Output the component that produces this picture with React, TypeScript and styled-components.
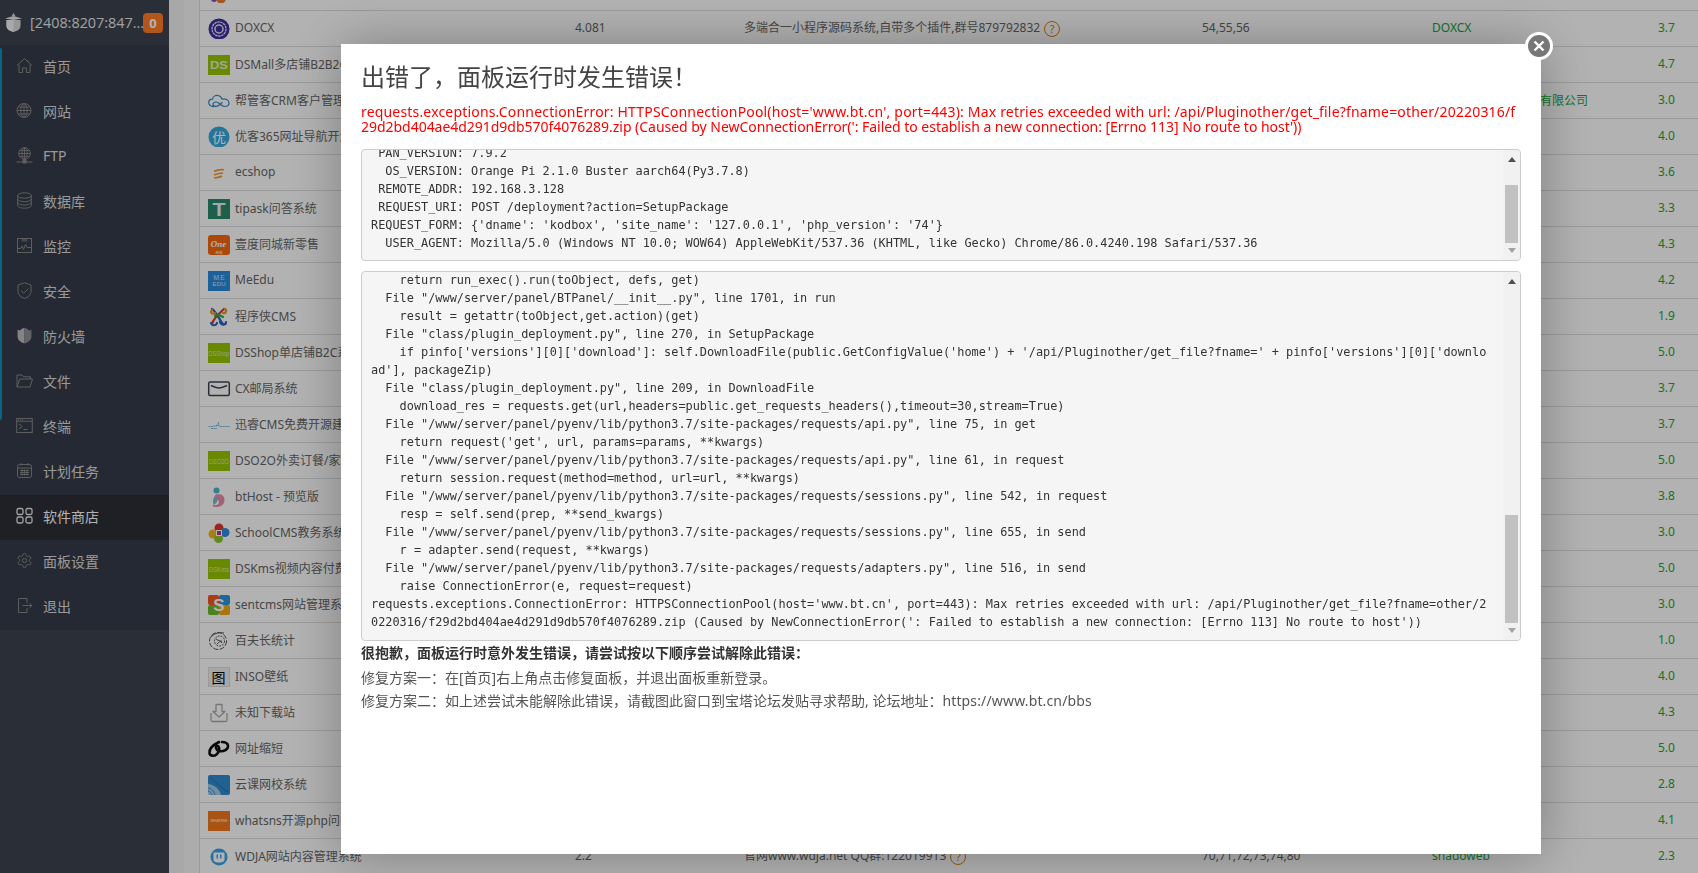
import React from 'react';
import styled, { createGlobalStyle } from 'styled-components';

const UI = `"Noto Sans", "Noto Sans CJK SC", sans-serif`;

const Global = createGlobalStyle`
  html, body { margin: 0; padding: 0; height: 100%; overflow: hidden; background: #f1f1f1; }
  body { font-family: ${UI}; font-size: 12px; color: #666; }
`;

const Page = styled.div`
  display: flex;
  height: 873px;
  overflow: hidden;
`;

const Sidebar = styled.aside`
  width: 169px;
  flex: none;
  background: #3c424f;
  display: flex;
  flex-direction: column;
`;

const SideHead = styled.div`
  height: 45px;
  display: flex;
  align-items: center;
  padding-left: 5px;
  color: #e6e6e6;
  font-size: 14.4px;
`;

const HeadTitle = styled.span`
  margin-left: 8px;
  width: 113px;
  white-space: nowrap;
  font-family: "Open Sans", ${UI};
`;

const Badge = styled.span`
  width: 20px;
  height: 20px;
  border-radius: 4px;
  background: #ff7b28;
  color: #fff;
  font-size: 13px;
  font-weight: 700;
  display: flex;
  align-items: center;
  justify-content: center;
`;

const Menu = styled.nav`
  position: relative;
  background: #363c49;
  &::before {
    content: '';
    position: absolute;
    left: 0;
    top: 3px;
    width: 2px;
    height: 372px;
    background: #0e90c0;
    border-radius: 0 2px 2px 0;
  }
`;

const MenuItem = styled.div<{ $active?: boolean }>`
  height: 45px;
  box-sizing: border-box;
  padding: 0 0 4px 16px;
  display: flex;
  align-items: center;
  gap: 10px;
  font-size: 14px;
  color: ${p => (p.$active ? '#fff' : '#dcdcdc')};
  background: ${p => (p.$active ? '#2b2e35' : 'transparent')};
  svg { width: 17px; height: 17px; flex: none; }
`;

const Strip = styled.div`
  width: 15px;
  flex: none;
  background: #f1f1f1;
`;

const Main = styled.main`
  flex: 1;
  min-width: 0;
  background: #f7f7f7;
  padding-left: 15px;
`;

const Table = styled.div`
  margin-top: -25px;
  background: #fff;
  border-left: 1px solid #ddd;
`;

const Row = styled.div`
  height: 35px;
  box-sizing: border-box;
  padding-bottom: 2px;
  height: 36px;
  border-bottom: 1px solid #ddd;
  display: grid;
  grid-template-columns: 375px 169px 458px 230px 226px 1fr;
  align-items: center;
  white-space: nowrap;
`;

const NameCell = styled.div`
  display: flex;
  align-items: center;
  padding-left: 8px;
  gap: 5px;
  overflow: hidden;
  svg { width: 22px; height: 20px; flex: none; overflow: visible; margin-top: 2px; }
`;

const Cell = styled.div``;

const Dev = styled.div`
  color: #20a53a;
`;

const Score = styled.div`
  color: #20a53a;
`;

const Help = styled.span`
  display: inline-flex;
  align-items: center;
  justify-content: center;
  width: 14px;
  height: 14px;
  margin-left: 4px;
  border: 1px solid #e07b10;
  border-radius: 50%;
  color: #e07b10;
  font-size: 11px;
  line-height: 1;
  vertical-align: middle;
`;

const Overlay = styled.div`
  position: fixed;
  inset: 0;
  background: rgba(0, 0, 0, 0.3);
  z-index: 10;
`;

const Modal = styled.section`
  position: fixed;
  left: 341px;
  top: 44px;
  width: 1160px;
  height: 810px;
  padding: 0 20px;
  background: #fff;
  box-shadow: 1px 1px 50px rgba(0, 0, 0, 0.3);
  z-index: 11;
`;

const Close = styled.button`
  position: absolute;
  right: -12px;
  top: -12px;
  width: 28px;
  height: 28px;
  padding: 0;
  border: 3px solid #fff;
  border-radius: 50%;
  background: #777;
  display: flex;
  align-items: center;
  justify-content: center;
  svg { width: 12px; height: 12px; }
`;

const Title = styled.h1`
  margin: 0;
  padding-top: 16px;
  font-size: 24px;
  line-height: 34px;
  font-weight: 400;
  color: #444;
`;

const ErrorText = styled.div`
  margin: 10px 0 15px;
  color: #f00;
  font-size: 14px;
  line-height: 15px;
  white-space: pre;
`;

const ErrorLine = styled.div<{ $ls: number }>`
  letter-spacing: ${p => p.$ls}px;
`;

const Pre = styled.div<{ $h: number }>`
  height: ${p => p.$h}px;
  box-sizing: border-box;
  border: 1px solid #ccc;
  border-radius: 4px;
  background: #f5f5f5;
  display: flex;
  overflow: hidden;
  margin-bottom: 10px;
`;

const Code = styled.pre<{ $shift: number }>`
  flex: 1;
  min-width: 0;
  margin: ${p => p.$shift}px 0 0;
  padding-left: 9px;
  font-family: "DejaVu Sans Mono", monospace;
  font-size: 11.88px;
  line-height: 18px;
  color: #333;
  overflow: hidden;
`;

const Scrollbar = styled.div`
  width: 17px;
  flex: none;
  display: flex;
  flex-direction: column;
  align-items: center;
  background: #f1f1f1;
`;

const ArrowUp = styled.i`
  width: 0;
  height: 0;
  margin-top: 7px;
  border: 4px solid transparent;
  border-top: 0;
  border-bottom: 5px solid #505050;
`;

const ArrowDown = styled.i`
  width: 0;
  height: 0;
  margin-bottom: 7px;
  border: 4px solid transparent;
  border-bottom: 0;
  border-top: 5px solid #a3a3a3;
`;

const Track = styled.div<{ $top: number; $h: number }>`
  flex: 1;
  width: 100%;
  padding: ${p => p.$top}px 2px 0;
  box-sizing: border-box;
  &::after {
    content: '';
    display: block;
    height: ${p => p.$h}px;
    background: #c1c1c1;
  }
`;

const Note = styled.p<{ $bold?: boolean }>`
  margin: 0 0 ${p => (p.$bold ? 1 : -1)}px;
  font-size: 14px;
  line-height: 24px;
  font-weight: ${p => (p.$bold ? 700 : 400)};
  color: ${p => (p.$bold ? '#333' : '#555')};
`;

const Url = styled.span`
  letter-spacing: 0.15px;
`;

const Notes = styled.div`
  margin-top: -10px;
`;

const S = { fill: 'none', stroke: '#878787', strokeWidth: 1 } as const;

const menu: [string, React.ReactNode, boolean?][] = [
  ['首页', <svg viewBox="0 0 17 17" {...S}><path d="M.8 8.6 8.5 1.6l7.7 7M3 7.5V15.5h3.6v-4.6h3.8v4.6H14V7.5M12 3.4V5" /></svg>],
  ['网站', <svg viewBox="0 0 17 17" {...S}><circle cx="8" cy="8.5" r="7" /><ellipse cx="8" cy="8.5" rx="3.2" ry="7" /><path d="M1 8.5h14M2 5h12M2 12h12M8 1.5v14" /></svg>],
  ['FTP', <svg viewBox="0 0 17 17" {...S}><circle cx="8.5" cy="6.5" r="5.8" /><ellipse cx="8.5" cy="6.5" rx="2.6" ry="5.8" /><path d="M2.7 6.5h11.6M3.5 3.6h10M3.5 9.4h10M8.5.7v13M.5 15h16" /><rect x="7" y="13" width="3" height="3" fill="#878787" /></svg>],
  ['数据库', <svg viewBox="0 0 17 17" {...S}><ellipse cx="8.5" cy="3.5" rx="6.8" ry="2.7" /><path d="M1.7 3.5v10c0 1.5 3 2.7 6.8 2.7s6.8-1.2 6.8-2.7v-10M1.7 7c0 1.5 3 2.7 6.8 2.7S15.300 8.500 15.300 7M1.700 10.300c0 1.500 3 2.700 6.800 2.700s6.800-1.200 6.800-2.700" /></svg>],
  ['监控', <svg viewBox="0 0 17 17" {...S}><rect x="1.500" y="1.500" width="14" height="14" /><path d="M1.500 11.500h3l1.500-2.500 1.500 3.500 2-5 1.500 3h4.500" /><rect x="5.500" y="1.500" width="6" height="3" fill="#878787" stroke="none" opacity=".6" /></svg>],
  ['安全', <svg viewBox="0 0 17 17" {...S}><path d="M8.500.8 15 3v6.500c0 3.500-3 5.800-6.500 6.900C5 15.300 2 13 2 9.500V3z" /><path d="m5 8.500 2.700 2.700L12.500 6.500" /></svg>],
  ['防火墙', <svg viewBox="0 0 17 17"><path d="M8.500.8V16.500C5 15.500 1.600 13 1.600 9.500V2.800L4 3.500 6 1.800z" fill="#bdbdbd" /><path d="M8.500.8V16.500c3.500-1 6.900-3.500 6.900-7V2.800L13 3.500 11 1.800z" fill="#8f8f8f" /></svg>],
  ['文件', <svg viewBox="0 0 17 17" {...S}><path d="M1 15V3h5l1.500 1.800h7V7M1 15l2.800-8H16.500L14 15z" /></svg>],
  ['终端', <svg viewBox="0 0 17 17" {...S}><rect x=".7" y="1.500" width="15.600" height="14" /><path d="M.7 4.200h15.600M3 7l3.200 2.500L3 12M7.500 12.500h4" /><path d="M2 2.900h6" strokeDasharray="1 1" /></svg>],
  ['计划任务', <svg viewBox="0 0 17 17" {...S}><rect x="1.500" y="2.500" width="14" height="13" rx="2" /><path d="M1.500 6h14M5 1v2.500M12 1v2.500M4 8.500h9M4 10.500h9M4 12.500h9" /><path d="M6 7.500v6M8.500 7.500v6M11 7.500v6" /></svg>],
  ['软件商店', <svg viewBox="0 0 17 17" fill="none" stroke="#e8e8e8" strokeWidth="1.300"><rect x="1" y="1.500" width="6" height="6" rx="1.500" /><rect x="10" y="1.500" width="6" height="6" rx="1.500" /><rect x="1" y="10" width="6" height="6" rx="1.500" /><rect x="10" y="10" width="6" height="6" rx="1.500" /></svg>, true],
  ['面板设置', <svg viewBox="0 0 24 24" {...S} strokeWidth="1.400"><path d="M12.220 2h-.44a2 2 0 0 0-2 2v.18a2 2 0 0 1-1 1.730l-.43.250a2 2 0 0 1-2 0l-.15-.08a2 2 0 0 0-2.730.730l-.22.380a2 2 0 0 0 .730 2.730l.15.100a2 2 0 0 1 1 1.720v.510a2 2 0 0 1-1 1.740l-.15.090a2 2 0 0 0-.730 2.730l.22.380a2 2 0 0 0 2.730.730l.15-.08a2 2 0 0 1 2 0l.43.250a2 2 0 0 1 1 1.730V20a2 2 0 0 0 2 2h.44a2 2 0 0 0 2-2v-.18a2 2 0 0 1 1-1.730l.43-.250a2 2 0 0 1 2 0l.15.080a2 2 0 0 0 2.730-.730l.22-.390a2 2 0 0 0-.730-2.730l-.15-.080a2 2 0 0 1-1-1.740v-.500a2 2 0 0 1 1-1.740l.15-.090a2 2 0 0 0 .730-2.730l-.22-.380a2 2 0 0 0-2.730-.730l-.15.080a2 2 0 0 1-2 0l-.43-.250a2 2 0 0 1-1-1.730V4a2 2 0 0 0-2-2z" /><circle cx="12" cy="12" r="3" /></svg>],
  ['退出', <svg viewBox="0 0 17 17" {...S}><path d="M11 1.500H2.500v14H11M11 11v4.500M11 1.500V6" /><path d="M6.500 8.500h9.500M13.500 6.300l2.500 2.200-2.500 2.200" /></svg>],
];

const Tile = ({ bg, t, c = '#e8f0d0', size = 7, len = 20, w }: { bg: string; t: string; c?: string; size?: number; len?: number; w?: number }) => (
  <svg viewBox="0 0 22 20">
    <rect width="22" height="20" fill={bg} />
    <text x="11" y="10" textAnchor="middle" dominantBaseline="central" fontSize={size} fontWeight={w} fill={c} textLength={len} lengthAdjust="spacingAndGlyphs" fontFamily="Liberation Sans, sans-serif">{t}</text>
  </svg>
);

const logos: React.ReactNode[] = [
  <svg viewBox="0 0 22 20"><circle cx="6" cy="16" r="3" fill="#7a52c8" /><circle cx="13" cy="15.500" r="5" fill="#ef7d2c" /></svg>,
  <svg viewBox="0 0 22 20"><circle cx="11" cy="10" r="10.500" fill="#3d2f9c" /><circle cx="11" cy="10" r="7" fill="none" stroke="#e3e3f3" strokeWidth="1.300" strokeDasharray="2.500 .6" /><circle cx="11" cy="10" r="4" fill="none" stroke="#e3e3f3" strokeWidth="1.500" /><circle cx="11" cy="10" r="1.500" fill="#3d2f9c" /></svg>,
  <Tile bg="#95c400" t="DS" size={11} w={700} len={18} />,
  <svg viewBox="0 0 22 20" fill="none" stroke="#2f8ac6" strokeWidth="1.200"><path d="M6 15.500c-3 .300-5.300-1.500-5.300-3.800 0-2 1.600-3.500 3.700-3.500C5 5.500 7.500 4 10 4.500c2.200.4 3.500 2 4 3.700 3-1 7 .6 7 3.800 0 2.300-2 3.500-4.500 3.500-3.500 0-5-4.500-8.500-4.500-1.800 0-3 .9-3 2.200s1.500 2.200 3 2.200c3 0 4.500-3 6.500-4" /></svg>,
  <svg viewBox="0 0 22 20"><circle cx="11" cy="10" r="10.500" fill="#33a9dd" /><text x="11" y="10" textAnchor="middle" dominantBaseline="central" fontSize="14" fill="#fff" fontFamily="Noto Sans CJK SC, sans-serif">优</text></svg>,
  <svg viewBox="0 0 22 20" fill="none" stroke="#f09a3a" strokeWidth="1.600"><path d="M6 8.500c2.500-1.500 6-2.200 10-1.800M6 12c3-1.500 6-1.500 9-2M6 15c3-.300 6-.600 8-2" /></svg>,
  <Tile bg="#278a6c" t="T" size={19} w={700} c="#eef" len={13} />,
  <svg viewBox="0 0 22 20"><rect width="22" height="20" rx="3" fill="#f5680f" /><text x="10.500" y="9" textAnchor="middle" dominantBaseline="central" fontSize="9" fontStyle="italic" fontWeight="700" fill="#fff" fontFamily="Liberation Serif, serif">One</text><text x="11" y="17" textAnchor="middle" dominantBaseline="central" fontSize="3.500" fill="#fff" fontFamily="Noto Sans CJK SC, sans-serif">商城</text></svg>,
  <svg viewBox="0 0 22 20"><rect width="22" height="20" fill="#2a8cdd" /><text x="11" y="6.500" textAnchor="middle" dominantBaseline="central" fontSize="6.500" fill="#cfe6f8" textLength={11} fontFamily="Liberation Sans, sans-serif">ME</text><text x="11" y="13" textAnchor="middle" dominantBaseline="central" fontSize="6" fill="#cfe6f8" textLength={13} fontFamily="Liberation Sans, sans-serif">EDU</text></svg>,
  <svg viewBox="0 0 22 20" fill="none" strokeWidth="2.200" strokeLinecap="round"><path d="M4 2c3 1 7 10 11 15" stroke="#2a62c8" /><path d="M16 2c-3 3-10 8-12 15" stroke="#d63a2c" /><path d="M4 3c-2 2 0 5 3 3M17 2c2 1 1 5-2 4" stroke="#e8951f" /><path d="M3 16c1 3 5 3 6 0M12 15c2 4 6 3 6 0" stroke="#2a62c8" /><path d="M7 9c3-2 5-1 8 1" stroke="#3caa3c" /></svg>,
  <Tile bg="#95c400" t="DSShop" size={8} c="#dfe9bc" len={21} />,
  <svg viewBox="0 0 22 20" fill="none" stroke="#3c4452" strokeWidth="1.500"><rect x=".7" y="3" width="20.600" height="13.500" rx="1.500" /><path d="M3 6.500c3.500 1.500 5.500 2.500 8 2.500s4.500-1 8-2.500" /></svg>,
  <svg viewBox="0 0 22 20" fill="none" stroke="#6fb8cf" strokeWidth="1.100"><path d="M.5 11.500h5c1-2 2 1 3-.500s1-2 2-1 1 2 2 1.500h9M3 13.500h6M10 9l1-2" strokeDasharray="2 .7" /></svg>,
  <Tile bg="#95c400" t="DSO2O" size={8} c="#dfe9bc" len={20} />,
  <svg viewBox="0 0 22 20"><circle cx="8.500" cy="3.500" r="3" fill="#4fb2c8" /><path d="M8 7.500c5-1 8.500 1 8.500 5.500s-4 7-8 7-4-1-3.500-2c4 1 6-1 6-3s-2-3-4-3c-1.500 0-.500-3 1-4.500z" fill="#e88ba6" /><path d="M8 8c-1 1-3 3-3 6 0 2 .500 3.500 1 4l3-3c1-1 1-4-1-5z" fill="#80b8cf" /></svg>,
  <svg viewBox="0 0 22 20"><circle cx="11" cy="5" r="4.500" fill="#e0342c" /><circle cx="17" cy="9.500" r="4.500" fill="#2f8de0" /><circle cx="5" cy="11" r="4.500" fill="#f2b51f" /><circle cx="10.500" cy="15.500" r="4.500" fill="#8fc52f" /><rect x="8.500" y="7.500" width="5" height="5" fill="#b8348c" stroke="#fff" /></svg>,
  <Tile bg="#95c400" t="DSKms" size={8} c="#dfe9bc" len={20} />,
  <svg viewBox="0 0 22 20"><rect width="11" height="10" rx="2" fill="#ef5a1f" /><rect x="11" width="11" height="10" rx="2" fill="#2a96de" /><rect y="10" width="11" height="10" rx="2" fill="#6cba2c" /><rect x="11" y="10" width="11" height="10" rx="2" fill="#f2aa14" /><text x="11" y="10" textAnchor="middle" dominantBaseline="central" fontSize="17" fontWeight="700" fill="#fff" fontFamily="Liberation Sans, sans-serif">S</text></svg>,
  <svg viewBox="0 0 22 20" fill="none" stroke="#444" strokeWidth=".9"><circle cx="10" cy="10" r="8.500" strokeDasharray="5 1.500" /><circle cx="11.500" cy="10" r="5" strokeDasharray="2 1" /><path d="M8 8c2 2 5 1 6 4M9 13c2-2 3-3 5-3M3 6c3-3 6-5 13-4" /></svg>,
  <svg viewBox="0 0 22 20"><rect x=".5" y=".5" width="21" height="19" fill="#f0f0ee" stroke="#ddd" /><text x="10.500" y="10" textAnchor="middle" dominantBaseline="central" fontSize="14" fill="#000" fontFamily="Noto Sans CJK SC, sans-serif">图</text></svg>,
  <svg viewBox="0 0 22 20" fill="none" stroke="#a9a9a9" strokeWidth="1.300" strokeLinejoin="round"><path d="M3 10v7c0 1 .7 1.500 1.500 1.500h13c.8 0 1.500-.500 1.500-1.500v-7" /><path d="M8 1.500h6v7h3l-6 5.500-6-5.500h3z" /></svg>,
  <svg viewBox="0 0 22 20" fill="none" stroke="#111" strokeWidth="2.600" strokeLinecap="round"><path d="M11 3C7 5 1 9 1.500 14c.3 3 4.500 3.500 7 1.500 3-2.500 3.500-6 2-8-1.200-1.500-3-.5-2.500 1.500.8 3 4 3.500 7 3s5.500-3 5-5.500c-.4-2-3-3.500-6-3.500" /></svg>,
  <svg viewBox="0 0 22 20"><path d="M2 0h18a2 2 0 0 1 2 2v16a2 2 0 0 1-2 2H2a2 2 0 0 1-2-2V2a2 2 0 0 1 2-2z" fill="#2f8cd0" /><path d="M0 9c5 0 12 5 13 11H2c-1 0-2-1-2-2z" fill="#cfe7f5" opacity=".7" /><path d="M0 13c3 0 6 3 7 7M0 16c2 0 3 2 4 4" stroke="#2f8cd0" fill="none" /><path d="M2 2c3 3 11 11 18 15" stroke="#1f6fa8" fill="none" /></svg>,
  <svg viewBox="0 0 22 20"><rect width="22" height="20" fill="#f3781e" /><text x="11" y="10" textAnchor="middle" dominantBaseline="central" fontSize="3.800" fontWeight="700" fill="#ffd9b0" textLength={17} fontFamily="Liberation Sans, sans-serif">WHATSNS</text></svg>,
  <svg viewBox="0 0 22 20"><circle cx="11" cy="10" r="8.500" fill="#38a3e8" /><path d="M6.500 5.500h9c.8 0 1 .5 1 1v6c0 2-1.500 3-5.500 3s-5.500-1-5.500-3v-6c0-.5.200-1 1-1z" fill="#fff" /><rect x="8.500" y="7.500" width="1.500" height="4" fill="#38a3e8" /><rect x="12" y="7.500" width="1.500" height="4" fill="#38a3e8" /></svg>,
];

type RowData = { n?: string; s?: string; v?: string; d?: string; ids?: string; dev?: string; help?: boolean };

const rows: RowData[] = [
  {},
  { n: 'DOXCX', v: '4.081', d: '多端合一小程序源码系统,自带多个插件,群号879792832', help: true, ids: '54,55,56', dev: 'DOXCX', s: '3.7' },
  { n: 'DSMall多店铺B2B2C系统', s: '4.7' },
  { n: '帮管客CRM客户管理系统', dev: '北京帮管客网络科技有限公司', s: '3.0' },
  { n: '优客365网址导航开源版', s: '4.0' },
  { n: 'ecshop', s: '3.6' },
  { n: 'tipask问答系统', s: '3.3' },
  { n: '壹度同城新零售', s: '4.3' },
  { n: 'MeEdu', s: '4.2' },
  { n: '程序侠CMS', s: '1.9' },
  { n: 'DSShop单店铺B2C系统', s: '5.0' },
  { n: 'CX邮局系统', s: '3.7' },
  { n: '迅睿CMS免费开源建站系统', s: '3.7' },
  { n: 'DSO2O外卖订餐/家政系统', s: '5.0' },
  { n: 'btHost - 预览版', s: '3.8' },
  { n: 'SchoolCMS教务系统', s: '3.0' },
  { n: 'DSKms视频内容付费系统', s: '5.0' },
  { n: 'sentcms网站管理系统', s: '3.0' },
  { n: '百夫长统计', s: '1.0' },
  { n: 'INSO壁纸', s: '4.0' },
  { n: '未知下载站', s: '4.3' },
  { n: '网址缩短', s: '5.0' },
  { n: '云课网校系统', s: '2.8' },
  { n: 'whatsns开源php问答系统', s: '4.1' },
  { n: 'WDJA网站内容管理系统', v: '2.2', d: '官网www.wdja.net QQ群:122019913', help: true, ids: '70,71,72,73,74,80', dev: 'shadoweb', s: '2.3' },
];

const env = ` PAN_VERSION: 7.9.2
  OS_VERSION: Orange Pi 2.1.0 Buster aarch64(Py3.7.8)
 REMOTE_ADDR: 192.168.3.128
 REQUEST_URI: POST /deployment?action=SetupPackage
REQUEST_FORM: {'dname': 'kodbox', 'site_name': '127.0.0.1', 'php_version': '74'}
  USER_AGENT: Mozilla/5.0 (Windows NT 10.0; WOW64) AppleWebKit/537.36 (KHTML, like Gecko) Chrome/86.0.4240.198 Safari/537.36`;

const trace = `    return run_exec().run(toObject, defs, get)
  File "/www/server/panel/BTPanel/__init__.py", line 1701, in run
    result = getattr(toObject,get.action)(get)
  File "class/plugin_deployment.py", line 270, in SetupPackage
    if pinfo['versions'][0]['download']: self.DownloadFile(public.GetConfigValue('home') + '/api/Pluginother/get_file?fname=' + pinfo['versions'][0]['downlo
ad'], packageZip)
  File "class/plugin_deployment.py", line 209, in DownloadFile
    download_res = requests.get(url,headers=public.get_requests_headers(),timeout=30,stream=True)
  File "/www/server/panel/pyenv/lib/python3.7/site-packages/requests/api.py", line 75, in get
    return request('get', url, params=params, **kwargs)
  File "/www/server/panel/pyenv/lib/python3.7/site-packages/requests/api.py", line 61, in request
    return session.request(method=method, url=url, **kwargs)
  File "/www/server/panel/pyenv/lib/python3.7/site-packages/requests/sessions.py", line 542, in request
    resp = self.send(prep, **send_kwargs)
  File "/www/server/panel/pyenv/lib/python3.7/site-packages/requests/sessions.py", line 655, in send
    r = adapter.send(request, **kwargs)
  File "/www/server/panel/pyenv/lib/python3.7/site-packages/requests/adapters.py", line 516, in send
    raise ConnectionError(e, request=request)
requests.exceptions.ConnectionError: HTTPSConnectionPool(host='www.bt.cn', port=443): Max retries exceeded with url: /api/Pluginother/get_file?fname=other/2
0220316/f29d2bd404ae4d291d9db570f4076289.zip (Caused by NewConnectionError(': Failed to establish a new connection: [Errno 113] No route to host'))`;

const CodeBox = ({ h, shift, top, thumb, text }: { h: number; shift: number; top: number; thumb: number; text: string }) => (
  <Pre $h={h}>
    <Code $shift={shift}>{text}</Code>
    <Scrollbar>
      <ArrowUp />
      <Track $top={top} $h={thumb} />
      <ArrowDown />
    </Scrollbar>
  </Pre>
);

export default function App() {
  return (
    <>
      <Global />
      <Page>
        <Sidebar>
          <SideHead>
            <svg width="17" height="20" viewBox="0 0 17 20">
              <path d="M1.500 7h14v6c0 3-3 5-7 6-4-1-7-3-7-6z" fill="#d8d8d8" />
              <path d="M8.500 7v12c-4-1-7-3-7-6V7z" fill="#f2f2f2" />
              <path d="M0 5.500 8.500 3 17 5.500 8.500 7z" fill="#e8e8e8" />
              <path d="M6.500 3.200 8.500 0l2 3.200z" fill="#d8d8d8" />
            </svg>
            <HeadTitle>[2408:8207:847...</HeadTitle>
            <Badge>0</Badge>
          </SideHead>
          <Menu>
            {menu.map(([t, icon, active]) => (
              <MenuItem key={t} $active={active}>{icon}<span>{t}</span></MenuItem>
            ))}
          </Menu>
        </Sidebar>
        <Strip />
        <Main>
          <Table>
            {rows.map((r, i) => (
              <Row key={i}>
                <NameCell>{logos[i]}<span>{r.n}</span></NameCell>
                <Cell>{r.v}</Cell>
                <Cell>{r.d}{r.help && <Help>?</Help>}</Cell>
                <Cell>{r.ids}</Cell>
                <Dev>{r.dev}</Dev>
                <Score>{r.s}</Score>
              </Row>
            ))}
          </Table>
        </Main>
      </Page>
      <Overlay />
      <Modal>
        <Close aria-label="关闭">
          <svg viewBox="0 0 12 12" stroke="#fff" strokeWidth="2.400"><path d="M1.500 1.500l9 9M10.500 1.500l-9 9" /></svg>
        </Close>
        <Title>出错了，面板运行时发生错误！</Title>
        <ErrorText>
          <ErrorLine $ls={0.177}>requests.exceptions.ConnectionError: HTTPSConnectionPool(host='www.bt.cn', port=443): Max retries exceeded with url: /api/Pluginother/get_file?fname=other/20220316/f</ErrorLine>
          <ErrorLine $ls={-0.03}>29d2bd404ae4d291d9db570f4076289.zip (Caused by NewConnectionError(': Failed to establish a new connection: [Errno 113] No route to host'))</ErrorLine>
        </ErrorText>
        <CodeBox h={112} shift={-6} top={23} thumb={58} text={env} />
        <CodeBox h={370} shift={-1} top={231} thumb={108} text={trace} />
        <Notes>
          <Note $bold>很抱歉，面板运行时意外发生错误，请尝试按以下顺序尝试解除此错误：</Note>
          <Note>修复方案一：在[首页]右上角点击修复面板，并退出面板重新登录。</Note>
          <Note>修复方案二：如上述尝试未能解除此错误，请截图此窗口到宝塔论坛发贴寻求帮助, 论坛地址：<Url>https://www.bt.cn/bbs</Url></Note>
        </Notes>
      </Modal>
    </>
  );
}
